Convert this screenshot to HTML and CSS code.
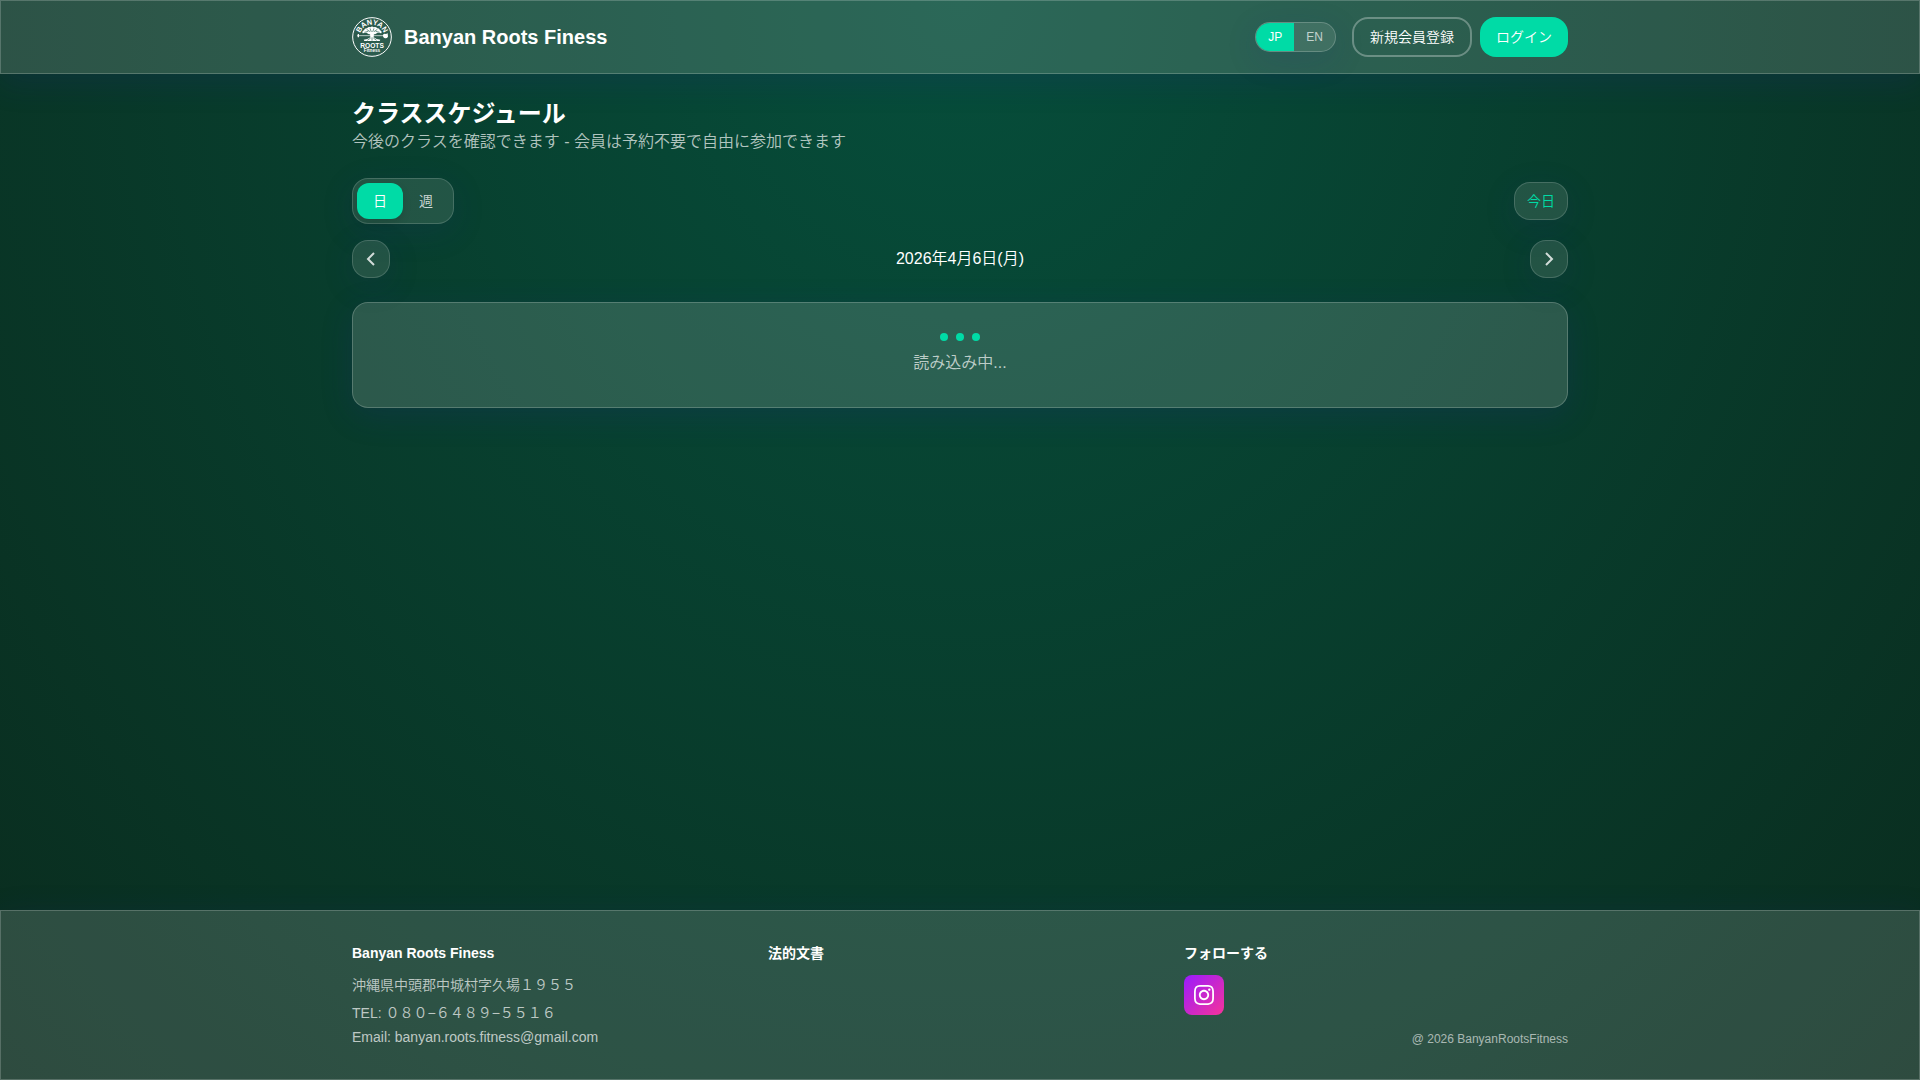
FILE: index.html
```html
<!DOCTYPE html>
<html lang="ja">
<head>
  <meta charset="UTF-8" />
  <meta name="viewport" content="width=device-width, initial-scale=1.0"/>
  <title>クラススケジュール | Banyan Roots Finess</title>
  <link rel="stylesheet" href="styles.css">
</head>

<body>
  <header class="site-header glass">
    <div class="container header-inner">
      <a href="index.html" class="brand">
        <svg class="brand-logo" viewBox="0 0 120 120" aria-hidden="true">
          <defs>
            <path id="logo-arc" d="M23 60 A37 37 0 0 1 97 60" />
          </defs>
          <circle cx="60" cy="60" r="58" fill="none" stroke="#fff" stroke-width="3" />
          <text class="logo-name" text-anchor="middle"><textPath href="#logo-arc" startOffset="50%">BANYAN</textPath></text>
          <!-- canopy -->
          <path fill="#fff" d="M32 49 Q29 43 36 40 Q38 33 45 34 Q50 28 55 31 Q60 26 65 31 Q71 28 76 34 Q82 33 84 40 Q91 43 88 49 L77 47 L69 52 L51 52 L43 47 Z" />
          <path fill="none" stroke="#2c6455" stroke-width="2" d="M37 46 L49 43 M44 37 L54 44 M54 34 L58 45 M66 34 L62 45 M76 37 L66 44 M83 46 L71 43" />
          <!-- barbell -->
          <path stroke="#fff" stroke-width="2" d="M15 56 H106" />
          <rect x="17" y="51" width="4" height="10" rx="1" fill="#fff" />
          <path fill="#fff" d="M93 53 Q97 48 102 51 L107 49 L108 59 Q104 66 97 63 Q92 60 93 53 Z" />
          <!-- trunk and roots -->
          <path fill="#fff" d="M54 48 H66 L65 61 L74 66 L85 68 L83 72 H37 L35 68 L46 66 L55 61 Z" />
          <path fill="none" stroke="#2c6455" stroke-width="2" d="M56 63 L46 70 M60 61 V71 M64 63 L74 70" />
          <text x="60" y="92" class="logo-roots" text-anchor="middle">ROOTS</text>
          <text x="60" y="106" class="logo-fitness" text-anchor="middle">Fitness</text>
        </svg>
        <span class="brand-name">Banyan Roots Finess</span>
      </a>
      <div class="header-actions">
        <div class="lang-toggle">
          <button type="button" class="lang-btn active">JP</button>
          <button type="button" class="lang-btn">EN</button>
        </div>
        <div class="auth-links">
          <a href="register.html" class="btn btn-outline">新規会員登録</a>
          <a href="login.html" class="btn btn-primary">ログイン</a>
        </div>
      </div>
    </div>
  </header>

  <main class="container">
    <section class="page-title">
      <h1>クラススケジュール</h1>
      <p>今後のクラスを確認できます - 会員は予約不要で自由に参加できます</p>
    </section>

    <div class="toolbar">
      <div class="view-toggle">
        <button type="button" class="view-btn active">日</button>
        <button type="button" class="view-btn">週</button>
      </div>
      <button type="button" class="glass-btn today-btn">今日</button>
    </div>

    <div class="date-nav">
      <button type="button" class="glass-btn icon-btn" aria-label="前の日">
        <svg viewBox="0 0 20 20"><path d="M13 4 L7 10 L13 16" /></svg>
      </button>
      <h2>2026年4月6日(月)</h2>
      <button type="button" class="glass-btn icon-btn" aria-label="次の日">
        <svg viewBox="0 0 20 20"><path d="M7 4 L13 10 L7 16" /></svg>
      </button>
    </div>

    <section class="loading-card glass">
      <div class="dots">
        <span></span>
        <span></span>
        <span></span>
      </div>
      <p>読み込み中...</p>
    </section>
  </main>

  <footer class="site-footer glass">
    <div class="container footer-grid">
      <div>
        <h3>Banyan Roots Finess</h3>
        <address>
          <p class="street">沖縄県中頭郡中城村字久場１９５５</p>
          <p>TEL: ０８０−６４８９−５５１６</p>
          <p>Email: banyan.roots.fitness@gmail.com</p>
        </address>
      </div>
      <div>
        <h3>法的文書</h3>
      </div>
      <div>
        <h3>フォローする</h3>
        <a href="https://www.instagram.com/" class="instagram" aria-label="Instagram">
          <svg viewBox="0 0 24 24">
            <path d="M12 2.163c3.204 0 3.584.012 4.85.07 3.252.148 4.771 1.691 4.919 4.919.058 1.265.069 1.645.069 4.849 0 3.205-.012 3.584-.069 4.849-.149 3.225-1.664 4.771-4.919 4.919-1.266.058-1.644.07-4.85.07-3.204 0-3.584-.012-4.849-.07-3.26-.149-4.771-1.699-4.919-4.92-.058-1.265-.07-1.644-.07-4.849 0-3.204.013-3.583.07-4.849.149-3.227 1.664-4.771 4.919-4.919 1.266-.057 1.645-.069 4.849-.069zm0-2.163c-3.259 0-3.667.014-4.947.072-4.358.2-6.78 2.618-6.98 6.98-.059 1.281-.073 1.689-.073 4.948 0 3.259.014 3.668.072 4.948.2 4.358 2.618 6.78 6.98 6.98 1.281.058 1.689.072 4.948.072 3.259 0 3.668-.014 4.948-.072 4.354-.2 6.782-2.618 6.979-6.98.059-1.28.073-1.689.073-4.948 0-3.259-.014-3.667-.072-4.947-.196-4.354-2.617-6.78-6.979-6.98-1.281-.059-1.69-.073-4.949-.073zm0 5.838c-3.403 0-6.162 2.759-6.162 6.162s2.759 6.163 6.162 6.163 6.162-2.759 6.162-6.163c0-3.403-2.759-6.162-6.162-6.162zm0 10.162c-2.209 0-4-1.79-4-4 0-2.209 1.791-4 4-4s4 1.791 4 4c0 2.21-1.791 4-4 4zm6.406-11.845c-.796 0-1.441.645-1.441 1.44s.645 1.44 1.441 1.44c.795 0 1.439-.645 1.439-1.44s-.644-1.44-1.439-1.44z" />
          </svg>
        </a>
        <p class="copyright">@ 2026 BanyanRootsFitness</p>
      </div>
    </div>
  </footer>
</body>
</html>
```

FILE: styles.css
```css
* {
  margin: 0;
  padding: 0;
  box-sizing: border-box;
}

body {
  min-height: 100vh;
  display: flex;
  flex-direction: column;
  background: radial-gradient(ellipse at top, #064e3b, #0a2c1e);
  color: #fff;
  font-family: "Liberation Sans", "Noto Sans CJK JP", sans-serif;
  font-size: 16px;
  font-weight: 350;
  line-height: 24px;
}

a {
  color: inherit;
  text-decoration: none;
}

button {
  border: none;
  background: none;
  color: inherit;
  font-family: inherit;
  font-weight: inherit;
  cursor: pointer;
}

.container {
  width: 100%;
  max-width: 1280px;
  margin: 0 auto;
  padding: 0 32px;
}

.glass {
  background: rgba(255, 255, 255, 0.15);
  border: 1px solid rgba(255, 255, 255, 0.2);
  box-shadow: 0 8px 32px rgba(31, 38, 135, 0.2);
}

/* Header */
.site-header {
  padding: 16px 0;
}

.header-inner,
.brand,
.header-actions,
.auth-links {
  display: flex;
  align-items: center;
}

.header-inner {
  justify-content: space-between;
}

.brand {
  gap: 12px;
}

.brand-logo {
  width: 40px;
  height: 40px;
}

.brand-logo text {
  fill: #fff;
  font-weight: bold;
}

.logo-name {
  font-size: 22px;
}

.logo-roots {
  font-size: 20px;
}

.logo-fitness {
  font-size: 14px;
}

.brand-name {
  font-size: 20px;
  line-height: 28px;
  font-weight: bold;
}

.header-actions {
  gap: 16px;
}

.auth-links {
  gap: 8px;
}

.lang-toggle {
  display: flex;
  overflow: hidden;
  background: rgba(255, 255, 255, 0.1);
  border: 1px solid rgba(255, 255, 255, 0.2);
  border-radius: 16px;
  box-shadow: 0 8px 32px rgba(31, 38, 135, 0.15);
}

.lang-btn {
  padding: 6px 12px;
  font-size: 12px;
  line-height: 16px;
  color: rgba(255, 255, 255, 0.7);
}

.lang-btn.active,
.view-btn.active {
  background: #00dba6;
  color: #fff;
}

.btn {
  height: 40px;
  padding: 0 16px;
  display: flex;
  align-items: center;
  border-radius: 16px;
  font-size: 14px;
  line-height: 20px;
}

.btn-outline {
  border: 2px solid rgba(255, 255, 255, 0.3);
}

.btn-primary {
  background: #00dba6;
}

/* Schedule */
main {
  flex: 1;
}

.page-title {
  margin: 24px 0;
}

h1 {
  font-size: 24px;
  line-height: 32px;
}

.page-title p {
  color: rgba(255, 255, 255, 0.7);
}

.toolbar,
.date-nav {
  display: flex;
  align-items: center;
  justify-content: space-between;
}

.toolbar {
  margin-bottom: 16px;
}

.date-nav {
  margin-bottom: 24px;
}

.view-toggle,
.glass-btn {
  background: rgba(255, 255, 255, 0.11);
  border: 1px solid rgba(255, 255, 255, 0.16);
  border-radius: 16px;
  box-shadow: 0 8px 32px rgba(31, 38, 135, 0.15);
}

.view-toggle {
  display: flex;
  padding: 4px;
}

.view-btn {
  padding: 8px 16px;
  border-radius: 12px;
  font-size: 14px;
  line-height: 20px;
  color: rgba(255, 255, 255, 0.8);
}

.view-btn.active {
  box-shadow: 0 4px 8px rgba(0, 0, 0, 0.12);
}

.today-btn {
  padding: 8px 12px;
  font-size: 14px;
  line-height: 20px;
  color: #00dba6;
}

.icon-btn {
  width: 38px;
  height: 38px;
  display: flex;
  align-items: center;
  justify-content: center;
}

.icon-btn svg {
  width: 20px;
  height: 20px;
  fill: none;
  stroke: rgba(255, 255, 255, 0.8);
  stroke-width: 2;
}

.date-nav h2 {
  font-size: 16px;
  font-weight: inherit;
}

.loading-card {
  padding: 30px 32px 32px;
  border-radius: 16px;
  text-align: center;
}

.loading-card p {
  color: rgba(255, 255, 255, 0.7);
}

.dots {
  display: flex;
  justify-content: center;
  gap: 8px;
  margin-bottom: 10px;
}

.dots span {
  width: 8px;
  height: 8px;
  border-radius: 50%;
  background: #00dba6;
}

/* Footer */
.site-footer {
  padding: 32px 0;
}

.footer-grid {
  display: grid;
  grid-template-columns: repeat(3, 1fr);
  gap: 32px;
}

.footer-grid h3 {
  margin-bottom: 12px;
  font-size: 14px;
  line-height: 20px;
}

address {
  display: flex;
  flex-direction: column;
  gap: 4px;
  font-size: 14px;
  font-style: normal;
  line-height: 20px;
  color: rgba(255, 255, 255, 0.7);
}

.street {
  margin-bottom: 4px;
}

.instagram {
  width: 40px;
  height: 40px;
  display: flex;
  align-items: center;
  justify-content: center;
  border-radius: 8px;
  background: linear-gradient(to bottom right, #9a1bff, #f6339a);
}

.instagram svg {
  width: 20px;
  height: 20px;
  fill: #fff;
}

.copyright {
  margin-top: 16px;
  font-size: 12px;
  line-height: 16px;
  text-align: right;
  color: rgba(255, 255, 255, 0.6);
}
```
